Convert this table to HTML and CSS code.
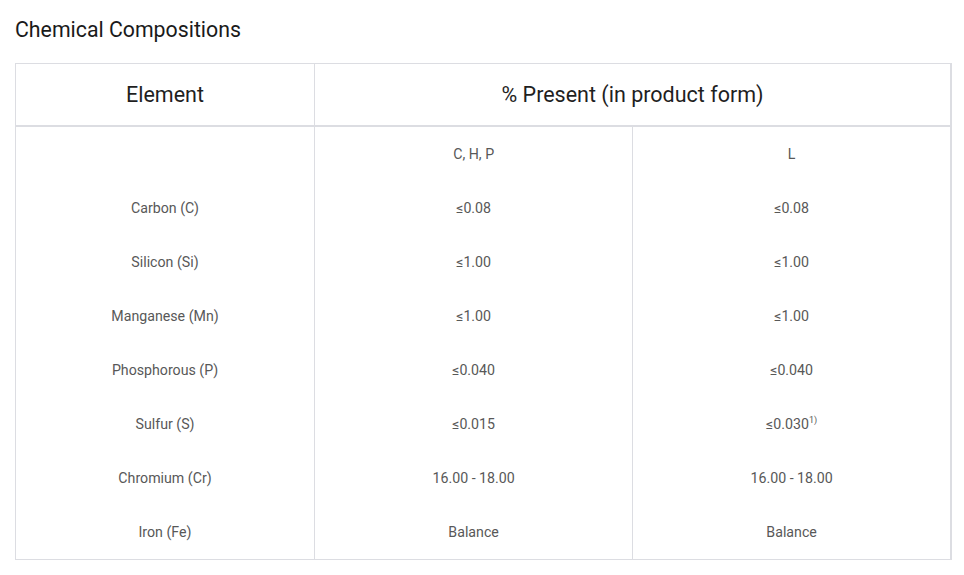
FILE: index.html
```html
<!DOCTYPE html>
<html>
<head>
<meta charset="utf-8">
<link rel="stylesheet" href="styles.css">
</head>
<body>
<div class="page">
  <h2 class="title">Chemical Compositions</h2>
  <table class="comp">
    <thead>
      <tr>
        <th class="c1">Element</th>
        <th colspan="2">% Present (in product form)</th>
      </tr>
    </thead>
    <tbody>
      <tr><td class="c1"></td><td class="c2">C, H, P</td><td class="c3">L</td></tr>
      <tr><td class="c1">Carbon (C)</td><td class="c2">≤0.08</td><td class="c3">≤0.08</td></tr>
      <tr><td class="c1">Silicon (Si)</td><td class="c2">≤1.00</td><td class="c3">≤1.00</td></tr>
      <tr><td class="c1">Manganese (Mn)</td><td class="c2">≤1.00</td><td class="c3">≤1.00</td></tr>
      <tr><td class="c1">Phosphorous (P)</td><td class="c2">≤0.040</td><td class="c3">≤0.040</td></tr>
      <tr><td class="c1">Sulfur (S)</td><td class="c2">≤0.015</td><td class="c3">≤0.030<sup>1)</sup></td></tr>
      <tr><td class="c1">Chromium (Cr)</td><td class="c2">16.00 - 18.00</td><td class="c3">16.00 - 18.00</td></tr>
      <tr><td class="c1">Iron (Fe)</td><td class="c2">Balance</td><td class="c3">Balance</td></tr>
    </tbody>
  </table>
</div>
</body>
</html>
```
FILE: styles.css
```css
html, body {
  margin: 0;
  padding: 0;
  background: #ffffff;
}
.page {
  padding: 16px 13px 0 15px;
  font-family: Roboto, "Liberation Sans", sans-serif;
}
.title {
  margin: 0 0 19px 0;
  font-size: 21.3px;
  line-height: 28px;
  font-weight: 400;
  color: #1a1a1a;
}
.comp {
  width: 937px;
  border-collapse: collapse;
  table-layout: fixed;
  border: 1px solid #dcdde2;
  border-right-width: 2px;
}
.comp th {
  height: 61px;
  font-size: 21.5px;
  font-weight: 400;
  color: #1f1f1f;
  text-align: center;
  border: 1px solid #dcdde2;
  border-bottom: 2px solid #dcdde2;
  padding: 0;
}
.comp th.c1 { width: 298px; }
.comp td {
  height: 54px;
  padding: 0;
  font-size: 14.2px;
  color: #585858;
  text-align: center;
  vertical-align: middle;
  border-left: 1px solid #dcdde2;
  border-right: 1px solid #dcdde2;
}
.comp td.c2 { width: 317px; }
.comp sup {
  font-size: 9px;
  line-height: 0;
  vertical-align: 6px;
}
```
